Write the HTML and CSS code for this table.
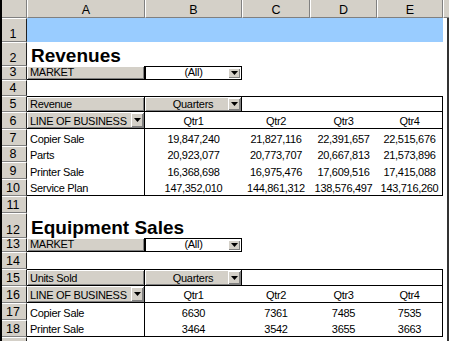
FILE: index.html
```html
<!DOCTYPE html>
<html>
<head>
<meta charset="utf-8">
<link rel="stylesheet" href="styles.css">
</head>
<body>
<div class="sheet">
  <!-- header -->
  <div class="corner"></div>
  <div class="ch">A</div><div class="ch">B</div><div class="ch">C</div><div class="ch">D</div><div class="ch">E</div><div class="ch chf"></div>

  <!-- 1 -->
  <div class="rh">1</div><div class="band"></div><div class="f"></div>
  <!-- 2 -->
  <div class="rh">2</div><div class="title">Revenues</div><div class="f"></div>
  <!-- 3 -->
  <div class="rh">3</div>
  <div class="cell btn">MARKET</div>
  <div class="cell pf ctr">(All)<span class="dd"><svg width="7" height="4" viewBox="0 0 7 4"><path d="M0 0H7L3.5 4Z"/></svg></span></div>
  <div class="empty3"></div><div class="f"></div>
  <!-- 4 -->
  <div class="rh">4</div><div class="empty5"></div><div class="f"></div>
  <!-- 5 -->
  <div class="rh">5</div>
  <div class="cell btn top">Revenue</div>
  <div class="cell btn top ctr">Quarters<span class="dd"><svg width="7" height="4" viewBox="0 0 7 4"><path d="M0 0H7L3.5 4Z"/></svg></span></div>
  <div class="cell top bot"></div><div class="cell top bot"></div><div class="cell top bot right"></div><div class="f"></div>
  <!-- 6 -->
  <div class="rh">6</div>
  <div class="cell btn">LINE OF BUSINESS<span class="dd"><svg width="7" height="4" viewBox="0 0 7 4"><path d="M0 0H7L3.5 4Z"/></svg></span></div>
  <div class="cell ctr bot">Qtr1</div><div class="cell ctr bot">Qtr2</div><div class="cell ctr bot">Qtr3</div><div class="cell ctr bot right">Qtr4</div><div class="f"></div>
  <!-- 7 -->
  <div class="rh">7</div>
  <div class="cell lab">Copier Sale</div>
  <div class="cell ctr">19,847,240</div><div class="cell ctr">21,827,116</div><div class="cell ctr">22,391,657</div><div class="cell ctr right">22,515,676</div><div class="f"></div>
  <!-- 8 -->
  <div class="rh">8</div>
  <div class="cell lab">Parts</div>
  <div class="cell ctr">20,923,077</div><div class="cell ctr">20,773,707</div><div class="cell ctr">20,667,813</div><div class="cell ctr right">21,573,896</div><div class="f"></div>
  <!-- 9 -->
  <div class="rh">9</div>
  <div class="cell lab">Printer Sale</div>
  <div class="cell ctr">16,368,698</div><div class="cell ctr">16,975,476</div><div class="cell ctr">17,609,516</div><div class="cell ctr right">17,415,088</div><div class="f"></div>
  <!-- 10 -->
  <div class="rh">10</div>
  <div class="cell lab bot">Service Plan</div>
  <div class="cell ctr bot">147,352,010</div><div class="cell ctr bot">144,861,312</div><div class="cell ctr bot">138,576,497</div><div class="cell ctr bot right">143,716,260</div><div class="f"></div>
  <!-- 11 -->
  <div class="rh">11</div><div class="empty5"></div><div class="f"></div>
  <!-- 12 -->
  <div class="rh">12</div><div class="title">Equipment Sales</div><div class="f"></div>
  <!-- 13 -->
  <div class="rh">13</div>
  <div class="cell btn">MARKET</div>
  <div class="cell pf ctr">(All)<span class="dd"><svg width="7" height="4" viewBox="0 0 7 4"><path d="M0 0H7L3.5 4Z"/></svg></span></div>
  <div class="empty3"></div><div class="f"></div>
  <!-- 14 -->
  <div class="rh">14</div><div class="empty5"></div><div class="f"></div>
  <!-- 15 -->
  <div class="rh">15</div>
  <div class="cell btn top">Units Sold</div>
  <div class="cell btn top ctr">Quarters<span class="dd"><svg width="7" height="4" viewBox="0 0 7 4"><path d="M0 0H7L3.5 4Z"/></svg></span></div>
  <div class="cell top bot"></div><div class="cell top bot"></div><div class="cell top bot right"></div><div class="f"></div>
  <!-- 16 -->
  <div class="rh">16</div>
  <div class="cell btn">LINE OF BUSINESS<span class="dd"><svg width="7" height="4" viewBox="0 0 7 4"><path d="M0 0H7L3.5 4Z"/></svg></span></div>
  <div class="cell ctr bot">Qtr1</div><div class="cell ctr bot">Qtr2</div><div class="cell ctr bot">Qtr3</div><div class="cell ctr bot right">Qtr4</div><div class="f"></div>
  <!-- 17 -->
  <div class="rh">17</div>
  <div class="cell lab">Copier Sale</div>
  <div class="cell ctr">6630</div><div class="cell ctr">7361</div><div class="cell ctr">7485</div><div class="cell ctr right">7535</div><div class="f"></div>
  <!-- 18 -->
  <div class="rh">18</div>
  <div class="cell lab bot">Printer Sale</div>
  <div class="cell ctr bot">3464</div><div class="cell ctr bot">3542</div><div class="cell ctr bot">3655</div><div class="cell ctr bot right">3663</div><div class="f"></div>
  <!-- 19 (partial) -->
  <div class="rh"></div><div class="empty5"></div><div class="f"></div>
</div>
</body>
</html>
```

FILE: styles.css
```css
* { box-sizing: border-box; margin: 0; padding: 0; }
html, body { margin: 0; background: #fff; }
body { font-family: "Liberation Sans", Arial, sans-serif; color: #000; }

.sheet {
  display: grid;
  grid-template-columns: 25px 118px 97px 68px 67px 66px 6px;
  grid-template-rows: 18px 24px 24px 14px 16px 16px 17px 17px 16px 17px 17px 17px 25px 14px 17px 17px 17px 17px 17px 17px;
  width: 449px;
  height: 341px;
  overflow: hidden;
  border-left: 2px solid #000;
}

.corner {
  background: #d4d0c8;
  border-right: 1px solid #808080;
  border-bottom: 1px solid #808080;
}

.ch {
  background: #d4d0c8;
  border-left: 1px solid #fff;
  border-right: 1px solid #808080;
  border-bottom: 1px solid #808080;
  font-size: 12.5px;
  line-height: 14px;
  display: flex;
  align-items: flex-end;
  justify-content: center;
}
.chf { border-right: none; }

.rh {
  background: #d4d0c8;
  border-top: 1px solid #fff;
  border-bottom: 1px solid #808080;
  border-right: 1px solid #222;
  font-size: 12.5px;
  line-height: 14px;
  display: flex;
  align-items: flex-end;
  justify-content: center;
  padding-right: 2px;
}

.f { border-right: 2px solid #333; }

.band {
  grid-column: span 5;
  background: #99ccff;
}

.title {
  grid-column: span 5;
  display: flex;
  align-items: flex-end;
  padding: 0 3px 0 4px;
  font-size: 19px;
  font-weight: bold;
  line-height: 20px;
  white-space: nowrap;
}

.empty3 { grid-column: span 3; }
.empty5 { grid-column: span 5; }

.cell {
  position: relative;
  display: flex;
  align-items: flex-end;
  padding: 0 3px 1px 3px;
  font-size: 11px;
  letter-spacing: -0.3px;
  line-height: 12px;
  white-space: nowrap;
}
.ctr { justify-content: center; }

.btn {
  background: #d4d0c8;
  border-right: 1px solid #000;
  border-bottom: 1px solid #000;
  box-shadow: inset 1px 1px 0 #fff, inset -1px -1px 0 #808080;
}

.pf { border: 1px solid #000; }

.top { border-top: 1px solid #000; }
.bot { border-bottom: 1px solid #000; }
.right { border-right: 1px solid #000; }
.lab { border-right: 1px solid #000; }

.dd {
  position: absolute;
  right: 1px;
  top: 1px;
  bottom: 1px;
  width: 12px;
  background: #d4d0c8;
  box-shadow: inset 1px 1px 0 #fff, inset -1px -1px 0 #808080;
  display: flex;
  align-items: center;
  justify-content: center;
}
.dd svg { display: block; fill: #000; }
```
